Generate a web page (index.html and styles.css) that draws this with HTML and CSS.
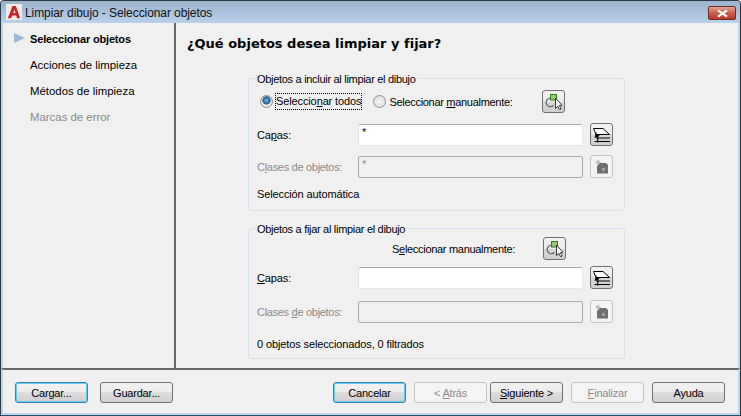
FILE: index.html
```html
<!DOCTYPE html>
<html lang="es">
<head>
<meta charset="utf-8">
<title>Limpiar dibujo - Seleccionar objetos</title>
<link rel="stylesheet" href="styles.css">
</head>
<body>
<svg class="defs" width="0" height="0" aria-hidden="true">
  <defs>
    <symbol id="pick" viewBox="0 0 17 17">
      <path d="M5 5.200A4.300 4.300 0 1 0 8.500 12.500" fill="none" stroke="#555" stroke-width="1.100"/>
      <rect x="5.500" y="1.500" width="6" height="5.500" fill="#9ccb78" stroke="#2f7d14"/>
      <path d="M10.500 5v10.500l2.300-2.200 1.700 3.500 1.600-.8-1.700-3.400h2.800z" fill="#fff" stroke="#222" stroke-width=".9"/>
    </symbol>
    <symbol id="layers" viewBox="0 0 17 16">
      <path d="M.5 1.500h9.500l6.500 6H3z" fill="#fff" stroke="#000"/>
      <path d="M3 7.500h14M3 11h14M1.500 14.500h15.500" stroke="#000" stroke-width="1" fill="none"/>
      <path d="M3 5l1 2.500 3 .5-1.500 1-.3 6.500H4l.3-5.500L1.500 11z" fill="#000"/>
    </symbol>
    <symbol id="classes" viewBox="0 0 16 16">
      <path d="M1 3l3-2.500 3 3-3 2.500z" fill="#c2c2c2"/>
      <path d="M3 7l3-3h6l2 2v8.500H3z" fill="#6f6f6f"/>
      <rect x="8" y="9" width="3" height="3" fill="#a3a3a3"/>
    </symbol>
  </defs>
</svg>
<div class="window">
  <header class="titlebar">
    <span class="app-icon"><svg viewBox="0 0 16 16" width="14" height="14"><path d="M1 15 6.200 1h4L15 15h-3.600l-.9-3H6.200l-2 3zM7.200 9h2.500L8.500 4.800z" fill="#c4262e"/></svg></span>
    <span class="title">Limpiar dibujo - Seleccionar objetos</span>
    <span class="close"><svg viewBox="0 0 14 10" width="13" height="9"><path d="M2 1.500 12 8.500M12 1.500 2 8.500" stroke="#fff" stroke-width="2.400" fill="none"/></svg></span>
  </header>
  <div class="main">
    <nav class="steps">
      <div class="step current">Seleccionar objetos</div>
      <div class="step">Acciones de limpieza</div>
      <div class="step">Métodos de limpieza</div>
      <div class="step off">Marcas de error</div>
    </nav>
    <section class="content">
      <h1>¿Qué objetos desea limpiar y fijar?</h1>
      <fieldset class="group first">
        <legend class="tight">Objetos a incluir al limpiar el dibujo</legend>
        <div class="radio-row">
          <span class="radio on"></span>
          <span class="focus-label">Seleccio<u>n</u>ar todos</span>
          <span class="radio"></span>
          <span class="radio-label tight">Seleccionar <u>m</u>anualmente:</span>
          <button class="icon-btn pick-btn"><svg width="17" height="17"><use href="#pick"/></svg></button>
        </div>
        <div class="field-row">
          <label>Ca<u>p</u>as:</label>
          <div class="input">*</div>
          <button class="icon-btn"><svg width="17" height="16"><use href="#layers"/></svg></button>
        </div>
        <div class="field-row dis">
          <label class="tight">C<u>l</u>ases de objetos:</label>
          <div class="input">*</div>
          <button class="icon-btn"><svg width="16" height="16"><use href="#classes"/></svg></button>
        </div>
        <p class="status">Selección automática</p>
      </fieldset>
      <fieldset class="group second">
        <legend class="tight">Objetos a fijar al limpiar el dibujo</legend>
        <div class="manual-row">
          <span class="tight">S<u>e</u>leccionar manualmente:</span>
          <button class="icon-btn pick-btn"><svg width="17" height="17"><use href="#pick"/></svg></button>
        </div>
        <div class="field-row">
          <label><u>C</u>apas:</label>
          <div class="input"></div>
          <button class="icon-btn"><svg width="17" height="16"><use href="#layers"/></svg></button>
        </div>
        <div class="field-row dis lower">
          <label class="tight">Clases <u>d</u>e objetos:</label>
          <div class="input"></div>
          <button class="icon-btn"><svg width="16" height="16"><use href="#classes"/></svg></button>
        </div>
        <p class="status low">0 objetos seleccionados, 0 filtrados</p>
      </fieldset>
    </section>
  </div>
  <footer class="footer">
    <button class="btn default">Cargar...</button>
    <button class="btn guardar">Guardar...</button>
    <button class="btn default cancel">Cancelar</button>
    <button class="btn dis-btn">&lt; <u>A</u>trás</button>
    <button class="btn next"><u>S</u>iguiente &gt;</button>
    <button class="btn dis-btn finish"><u>F</u>inalizar</button>
    <button class="btn help">Ayuda</button>
  </footer>
</div>
</body>
</html>
```
FILE: styles.css
```css
* { box-sizing: border-box; }
html, body { margin: 0; height: 100%; }
body { font: 11px/14px "Liberation Sans", Arial, sans-serif; letter-spacing: -0.12px; color: #000; background: #fff; overflow: hidden; }
.defs { position: absolute; }
u { text-underline-offset: 1px; }
.tight { letter-spacing: -0.3px; }
.window {
  width: 741px; height: 416px; display: flex; flex-direction: column;
  background: #f0f0f0; border: 1px solid #2b3a44; border-radius: 4px 4px 0 0;
  border-bottom-color: #1c4f66; overflow: hidden;
}
.titlebar {
  height: 22px; flex: none; display: flex; align-items: center; padding: 0 3px 0 5px;
  background: linear-gradient(to bottom, #9ab2cb 0, #b9d1ea 100%);
}
.app-icon { width: 16px; height: 16px; background: #f2e9e4; display: flex; align-items: center; justify-content: center; }
.title { margin: 1px 0 0 3px; color: #111; font-size: 12px; letter-spacing: -0.08px; }
.close {
  margin: 2px 1px 0 auto; width: 28px; height: 14px; border: 1px solid #6b2a22; border-radius: 2px;
  background: linear-gradient(to bottom, #e5a294 0, #c8604f 50%, #b8392a 100%);
  display: flex; align-items: center; justify-content: center;
}
.main { flex: 1; display: flex; min-height: 0; border-left: 2px solid #bcd4ec; border-right: 2px solid #bcd4ec; }
.steps { width: 173px; flex: none; border-right: 2px solid #696969; padding-top: 6.500px; }
.step { height: 26.200px; padding-left: 27px; line-height: 18px; position: relative; font-size: 11.400px; letter-spacing: 0; }
.step.current { font-weight: 700; font-size: 11px; letter-spacing: -0.16px; }
.step.current::before {
  content: ""; position: absolute; left: 11px; top: 3px; border-left: 11px solid #9db8d8;
  border-top: 5.500px solid transparent; border-bottom: 5.500px solid transparent;
}
.step.off { color: #8a8a8a; }
.content { flex: 1; padding: 12px 0 0 11px; }
h1 { margin: 0 0 25px; font: 700 13px/18px "DejaVu Sans", Verdana, sans-serif; letter-spacing: 0; }
.group {
  width: 377px; margin: 0 0 17px 61px; padding: 0 8px 0 7px; border: 1px solid #d9e2e8; border-radius: 3px; min-width: 0;
}
.group legend { padding: 2px 1px 0; margin-left: 0; line-height: 14px; }
.group.first { height: 141px; margin-top: -8px; }
.group.second { height: 139px; margin-top: -8px; }
.radio-row { display: flex; align-items: center; height: 23px; margin-top: 4px; margin-left: 4px; }
.radio {
  width: 13px; height: 13px; border-radius: 50%; border: 1px solid #8e8f8f; flex: none;
  background: radial-gradient(circle, #f5f5f5 0, #d8d8d8 100%);
}
.radio.on { background: radial-gradient(circle at 50% 40%, #6fb7e6 0, #1e5e90 45%, #eee 52%, #ddd 100%); }
.focus-label { margin-left: 3px; outline: 1px dotted #000; line-height: 15px; }
.focus-label + .radio { margin-left: 12px; }
.radio-label { margin-left: 3px; }
.icon-btn {
  width: 23px; height: 23px; padding: 0; flex: none; display: flex; align-items: center; justify-content: center;
  border: 1px solid #707070; border-radius: 3px; background: linear-gradient(to bottom, #f2f2f2 0, #ebebeb 50%, #d8d8d8 50%, #cfcfcf 100%);
}
.radio-row .pick-btn { margin-left: 30px; }
.field-row { display: grid; grid-template-columns: 94px 225px 23px; column-gap: 7px; align-items: center; margin-top: 10px; padding-left: 1px; }
.field-row + .field-row { margin-top: 9px; }
.input {
  height: 22px; background: #fff; border: 1px solid #abadb3; border-bottom-color: #e3e9ef; border-right-color: #e3e9ef;
  border-left-color: #e2e3ea; border-radius: 2px; padding: 1px 3px; line-height: 13px;
}
.dis { color: #8b8b8b; }
.dis .input { background: #f0f0f0; border-color: #a9a9a9; }
.dis .icon-btn { background: #f4f4f4; border-color: #c4c4c4; }
.status { margin: 9px 0 0 1px; line-height: 14px; }
.manual-row { display: flex; align-items: center; margin-top: 1px; padding-left: 136px; height: 23px; }
.manual-row .pick-btn { margin-left: 28px; }
.second .field-row { margin-top: 6px; }
.second .field-row.lower { margin-top: 11px; }
.status.low { margin-top: 14px; }
.footer {
  height: 47px; flex: none; display: flex; align-items: flex-start; padding: 12px 0 0 12px;
  border-top: 2px solid #696969; border-left: 2px solid #bcd4ec; border-right: 2px solid #bcd4ec; border-bottom: 2px solid #bcd4ec;
}
.btn {
  width: 73px; height: 21px; padding: 0; font: inherit; letter-spacing: -0.2px; color: #000; border: 1px solid #707070; border-radius: 3px;
  background: linear-gradient(to bottom, #f2f2f2 0, #ebebeb 50%, #dddddd 50%, #cfcfcf 100%);
}
.btn.default { border-color: #3c7fb1; box-shadow: inset 0 0 0 1px #5fd0f0; }
.guardar { margin-left: 12px; }
.cancel { margin-left: 160px; }
.dis-btn { background: #f4f4f4; border-color: #c4c4c4; color: #8b8b8b; margin-left: 8px; }
.next { margin-left: 3px; }
.finish { margin-left: 8px; }
.help { margin-left: 8px; }
```
